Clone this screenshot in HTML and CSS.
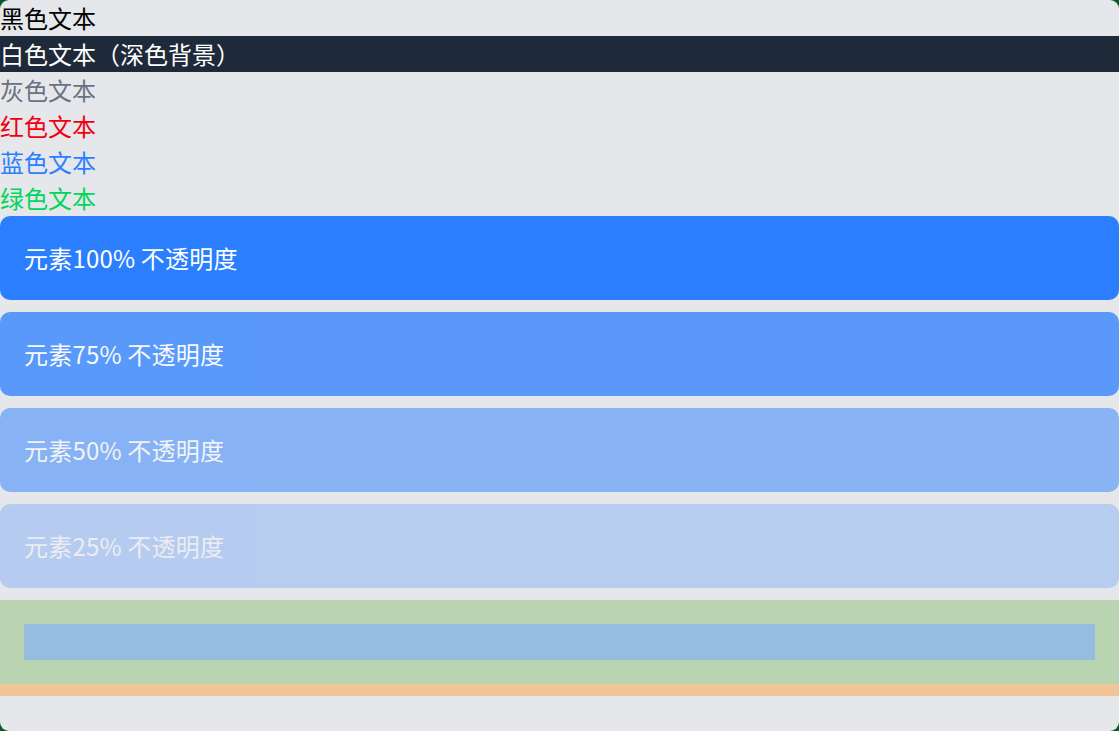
FILE: index.html
```html
<!DOCTYPE html>
<html lang="zh-CN">
<head>
    <meta charset="UTF-8">
    <meta name="viewport" content="width=device-width, initial-scale=1.0">
    <title>颜色与不透明度</title>
    <link rel="stylesheet" href="styles.css">
</head>
<body>
    <div class="page">
        <p class="text text-black">黑色文本</p>
        <p class="text text-white">白色文本（深色背景）</p>
        <p class="text text-gray">灰色文本</p>
        <p class="text text-red">红色文本</p>
        <p class="text text-blue">蓝色文本</p>
        <p class="text text-green">绿色文本</p>

        <div class="box op-100">元素100% 不透明度</div>
        <div class="box op-75">元素75% 不透明度</div>
        <div class="box op-50">元素50% 不透明度</div>
        <div class="box op-25">元素25% 不透明度</div>

        <div class="highlight">
            <div class="highlight-padding">
                <div class="highlight-content"></div>
            </div>
            <div class="highlight-margin"></div>
        </div>
    </div>
</body>
</html>
```

FILE: styles.css
```css
html, body {
    margin: 0;
    height: 100%;
    background: #0b5a2b; /* esquinas oscuras detrás de la página */
}
.page {
    box-sizing: border-box;
    min-height: 100%;
    background: #e5e7eb;
    border-radius: 9px;
    overflow: hidden;
    font-family: "Noto Sans CJK SC", "Noto Sans", sans-serif;
    font-size: 24px;
    line-height: 36px;
}
.text {
    margin: 0;
    height: 36px;
}
.text-black { color: #000; }
.text-white { color: #fff; background: #1e2939; }
.text-gray { color: #6a7282; }
.text-red { color: #f0000f; }
.text-blue { color: #2b7fff; }
.text-green { color: #00d65a; }

.box {
    background: #2b7fff;
    color: #fff;
    padding: 24px;
    margin-bottom: 12px;
    border-radius: 10px;
    letter-spacing: 0.2px;
}
.op-100 { opacity: 1; }
.op-75 { opacity: 0.75; }
.op-50 { opacity: 0.5; }
.op-25 { opacity: 0.25; }

/* caja resaltada (padding verde, contenido azul, margen naranja) */
.highlight-padding {
    background: #b8d4b0;
    padding: 24px;
}
.highlight-content {
    height: 36px;
    background: #96bce0;
}
.highlight-margin {
    height: 12px;
    background: #f1c597;
}
```
